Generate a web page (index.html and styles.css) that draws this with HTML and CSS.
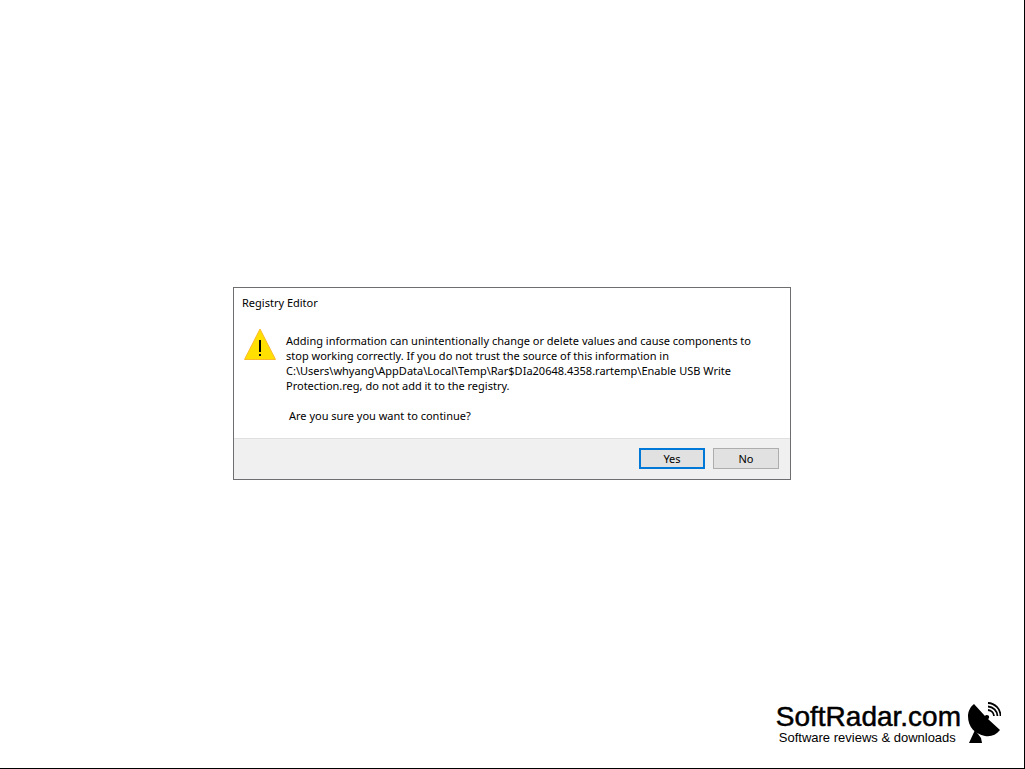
FILE: index.html
```html
<!DOCTYPE html>
<html lang="en">
<head>
    <meta charset="UTF-8">
    <meta name="viewport" content="width=device-width, initial-scale=1.0">
    <title>Registry Editor</title>
    <link rel="stylesheet" href="styles.css">
</head>
<body>

    <main class="dialog" role="dialog" aria-labelledby="title">
        <h1 id="title" class="title">Registry Editor</h1>
        <div class="content">
            <svg class="warning" viewBox="0 0 32 32" aria-hidden="true">
                <path d="M16 1 L31.5 31.5 H0.5 Z" fill="#ffe000" stroke="#fdb92c" stroke-width="1"/>
                <path d="M15 12 h2 v12 h-2 Z M15 26 h2 v2 h-2 Z" fill="#000"/>
            </svg>
            <div class="message">
                <p>Adding information can unintentionally change or delete values and cause components to<br>
                stop working correctly. If you do not trust the source of this information in<br>
                C:\Users\whyang\AppData\Local\Temp\Rar$DIa20648.4358.rartemp\Enable USB Write<br>
                Protection.reg, do not add it to the registry.</p>
                <p class="question">Are you sure you want to continue?</p>
            </div>
        </div>
        <div class="buttons">
            <button type="button" class="btn primary">Yes</button>
            <button type="button" class="btn">No</button>
        </div>
    </main>

    <footer class="brand">
        <div>
            <div class="name">SoftRadar.com</div>
            <div class="tagline">Software reviews &amp; downloads</div>
        </div>
        <svg class="dish" viewBox="0 0 34 42" aria-hidden="true">
            <path d="M7 2 L18 14 A2.2 2.2 0 1 1 21 17 L33 28 C29 33 24 35 18 34 C8 32 1 25 1 14 C1 9 4 4 7 2 Z"/>
            <path d="M8 28 L14 36 L15 41 H2 Z"/>
            <g fill="none" stroke="#000" stroke-width="1.8">
                <path d="M21 8 A6.500 6.500 0 0 1 27 14"/>
                <path d="M21 4.500 A10 10 0 0 1 30.500 14"/>
                <path d="M21 1 A13 13 0 0 1 33.500 14"/>
            </g>
        </svg>
    </footer>

</body>
</html>
```

FILE: styles.css
```css
html, body {
    margin: 0;
    padding: 0;
}
body {
    display: grid;
    box-sizing: border-box;
    min-height: 100vh;
    background-color: white;
    border-right: 1px solid black;
    border-bottom: 1px solid black;
    color: black;
    font-family: "Noto Sans", "Open Sans", sans-serif;
    font-size: 11px;
    line-height: 15px;
}
.dialog, .brand {
    grid-area: 1 / 1;
}
.dialog {
    place-self: center;
    box-sizing: border-box;
    width: 100%;
    max-width: 558px;
    margin-bottom: 2px;
    border: 1px solid #6e6e70;
}
.title {
    margin: 0;
    padding: 7px 8px 8px;
    font-size: 11px;
    font-weight: normal;
}
.content {
    display: flex;
    gap: 10px;
    padding: 10px 10px 15px;
}
.warning {
    flex: none;
    width: 32px;
    height: 32px;
}
.message {
    padding-top: 5px;
}
.message p {
    margin: 0;
}
.message .question {
    margin-top: 15px;
    padding-left: 3px;
}
.buttons {
    display: flex;
    justify-content: flex-end;
    gap: 8px;
    padding: 9px 11px 10px;
    background-color: #f0f0f0;
    border-top: 1px solid #dfdfdf;
}
.btn {
    width: 66px;
    height: 21px;
    padding: 0;
    background-color: #e1e1e1;
    border: 1px solid #adadad;
    color: black;
    font: inherit;
}
.primary {
    border: 2px solid #0078d7;
}
.brand {
    place-self: end;
    display: flex;
    gap: 6px;
    margin: 0 23px 24px 0;
    font-family: "Liberation Sans", Arial, sans-serif;
}
.name {
    font-size: 28px;
    line-height: 30px;
    -webkit-text-stroke: 0.5px black;
}
.tagline {
    padding-left: 3px;
    font-size: 13px;
    line-height: 12px;
}
.dish {
    width: 34px;
    height: 42px;
}
```
